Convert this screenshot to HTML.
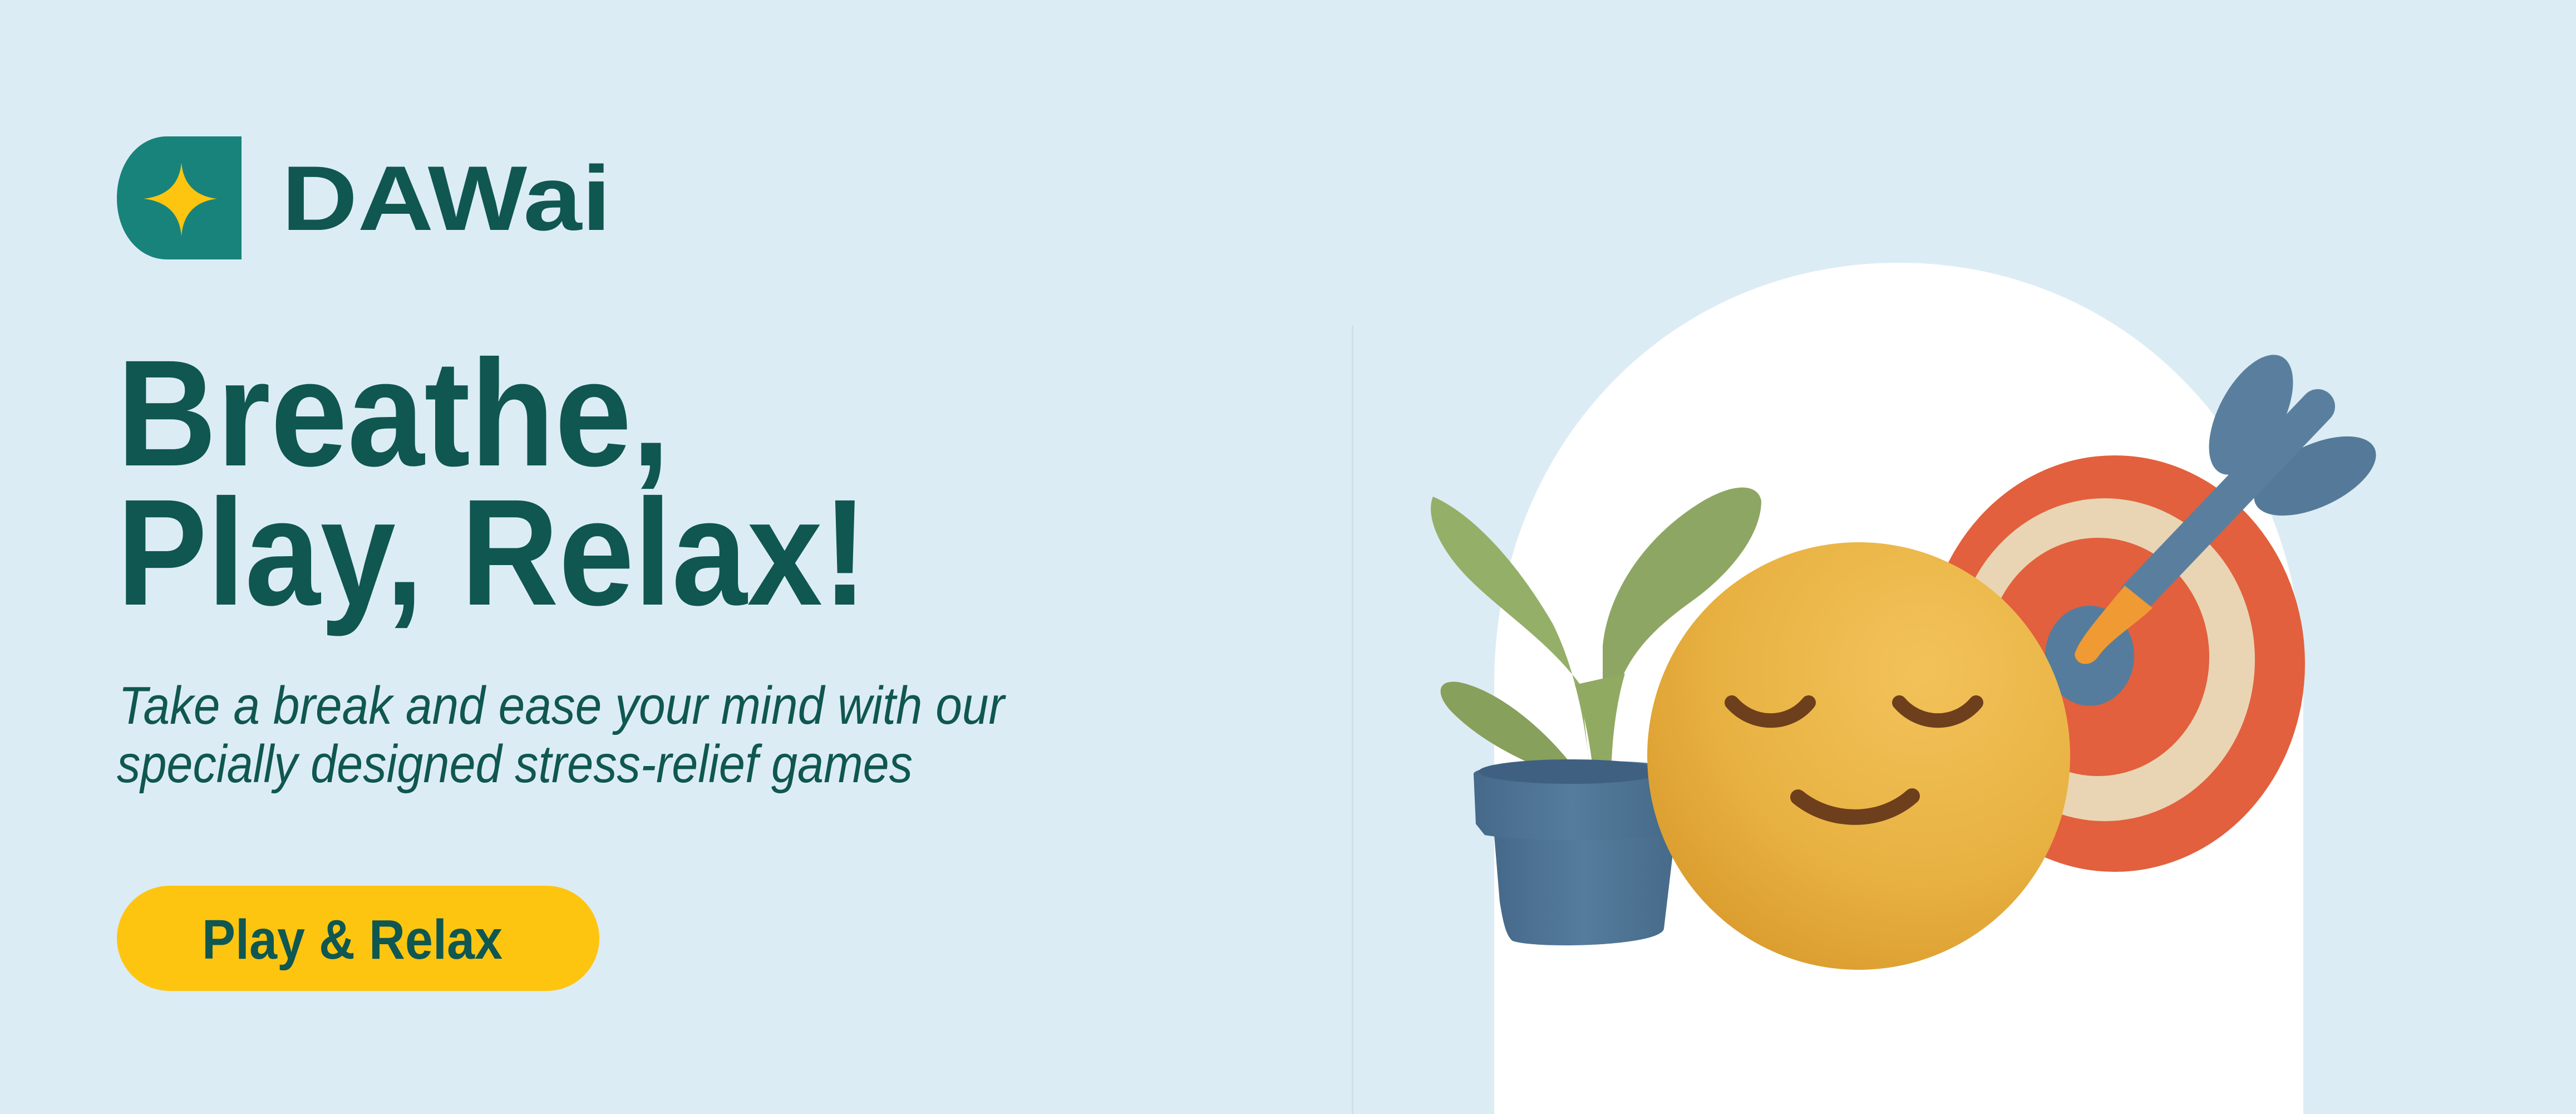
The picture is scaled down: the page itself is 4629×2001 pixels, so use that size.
<!DOCTYPE html>
<html><head><meta charset="utf-8"><style>
html,body{margin:0;padding:0;width:4629px;height:2001px;overflow:hidden;background:#dcecf5}
svg{display:block}
</style></head><body>
<svg width="4629" height="2001" viewBox="0 0 4629 2001" xmlns="http://www.w3.org/2000/svg">
<defs>
<radialGradient id="face" cx="0.65" cy="0.3" r="0.8">
<stop offset="0" stop-color="#f2c25a"/><stop offset="0.6" stop-color="#e8b242"/><stop offset="1" stop-color="#d99a2c"/>
</radialGradient>
<linearGradient id="pot" x1="0" y1="0" x2="1" y2="0">
<stop offset="0" stop-color="#46698a"/><stop offset="0.5" stop-color="#557c9c"/><stop offset="1" stop-color="#466a8a"/>
</linearGradient>
</defs>
<rect width="4629" height="2001" fill="#dcecf5"/>
<rect x="2429" y="584" width="3" height="1417" fill="#cfdfe8"/>
<path d="M2685 2001 L2685 1230 C2685 800 3000 472 3412 472 C3824 472 4139 800 4139 1230 L4139 2001 Z" fill="#ffffff"/>

<!-- logo -->
<path d="M300 245 L434 245 L434 466 L300 466 C250 466 210 420 210 356 C210 292 250 245 300 245 Z" fill="#18837b"/>
<path d="M326 292 Q331 350 390 357 Q331 364 326 424 Q321 364 258 357 Q321 350 326 292 Z" fill="#fec510"/>
<text x="506" y="413" font-family="Liberation Sans, sans-serif" font-weight="700" font-size="165" fill="#0f5750" textLength="592" lengthAdjust="spacingAndGlyphs">DAWai</text>

<text x="210" y="836" font-family="Liberation Sans, sans-serif" font-weight="700" font-size="272" fill="#0f5750" textLength="994" lengthAdjust="spacingAndGlyphs">Breathe,</text>
<text x="210" y="1086" font-family="Liberation Sans, sans-serif" font-weight="700" font-size="272" fill="#0f5750" textLength="1349" lengthAdjust="spacingAndGlyphs">Play, Relax!</text>

<text x="213" y="1300" font-family="Liberation Sans, sans-serif" font-style="italic" font-size="96" fill="#0f5750" textLength="1592" lengthAdjust="spacingAndGlyphs">Take a break and ease your mind with our</text>
<text x="210" y="1405" font-family="Liberation Sans, sans-serif" font-style="italic" font-size="96" fill="#0f5750" textLength="1430" lengthAdjust="spacingAndGlyphs">specially designed stress-relief games</text>

<rect x="210" y="1591" width="867" height="189" rx="94.5" fill="#fec510"/>
<text x="363" y="1722" font-family="Liberation Sans, sans-serif" font-weight="700" font-size="100" fill="#0f5750" textLength="540" lengthAdjust="spacingAndGlyphs">Play &amp; Relax</text>

<!-- target -->
<ellipse cx="3800" cy="1192" rx="342" ry="374" fill="#e2603d"/>
<ellipse cx="3782" cy="1185" rx="270" ry="290" fill="#e9d5b4"/>
<ellipse cx="3770" cy="1180" rx="200" ry="214" fill="#e2603d"/>
<ellipse cx="3755" cy="1178" rx="80" ry="90" fill="#557c9c"/>
<!-- arrow -->
<ellipse cx="4045" cy="745" rx="58" ry="118" transform="rotate(28 4045 745)" fill="#5a7f9e"/>
<ellipse cx="4160" cy="855" rx="118" ry="56" transform="rotate(-25 4160 855)" fill="#557a99"/>
<line x1="3840" y1="1070" x2="4165" y2="730" stroke="#5a7f9e" stroke-width="62" stroke-linecap="round"/>
<path d="M3818 1052 L3868 1092 C3840 1120 3790 1150 3770 1180 C3755 1200 3730 1195 3728 1175 C3735 1150 3770 1110 3818 1052 Z" fill="#ef9a32"/>

<!-- plant leaves -->
<path d="M2860 1410 C2850 1300 2830 1200 2790 1120 C2720 1000 2640 920 2575 892 C2560 930 2590 990 2640 1040 C2700 1100 2780 1150 2840 1230 Z" fill="#94af68"/>
<path d="M2880 1410 C2880 1300 2880 1220 2880 1160 C2890 1060 2960 960 3060 900 C3120 865 3160 870 3165 900 C3165 960 3110 1030 3040 1080 C2970 1130 2920 1180 2900 1260 Z" fill="#8ea663"/>
<path d="M2850 1410 C2800 1330 2700 1240 2620 1225 C2580 1220 2580 1250 2610 1280 C2670 1340 2760 1380 2850 1410 Z" fill="#87a05c"/>
<path d="M2830 1230 C2850 1290 2860 1350 2865 1410 L2895 1410 C2895 1330 2905 1260 2920 1210 Z" fill="#90aa62"/>
<!-- pot -->
<path d="M2685 1500 L3010 1500 L2990 1668 C2985 1700 2760 1705 2718 1690 C2705 1680 2700 1650 2695 1620 Z" fill="url(#pot)"/>
<path d="M2648 1390 C2650 1365 2990 1358 2995 1380 L3000 1500 C2900 1512 2740 1512 2668 1500 L2652 1480 Z" fill="url(#pot)"/>
<ellipse cx="2822" cy="1386" rx="165" ry="22" fill="#3f6080"/>
<!-- face -->
<ellipse cx="3340" cy="1358" rx="380" ry="384" fill="url(#face)"/>
<path d="M3112 1262 C3150 1305 3215 1305 3250 1262" fill="none" stroke="#6e3f1c" stroke-width="26" stroke-linecap="round"/>
<path d="M3413 1262 C3450 1305 3515 1305 3551 1262" fill="none" stroke="#6e3f1c" stroke-width="26" stroke-linecap="round"/>
<path d="M3231 1432 C3290 1480 3380 1480 3436 1430" fill="none" stroke="#6e3f1c" stroke-width="28" stroke-linecap="round"/>
</svg>
</body></html>
